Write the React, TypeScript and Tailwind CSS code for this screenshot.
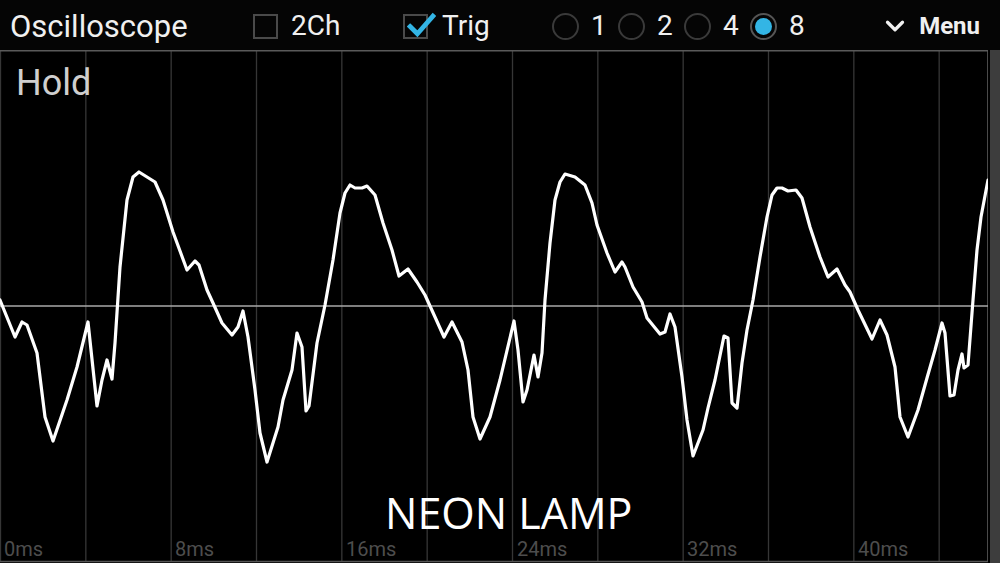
import { ChevronDown } from "lucide-react";

// traced from the capture, screen coords (y is shifted by the toolbar height below)
const trace: [number, number][] = [
  [0, 300], [15, 337], [22, 322], [27, 325], [37, 353], [45, 417], [53, 441], [67, 400],
  [77, 367], [88, 322], [97, 406], [102, 380], [107, 360], [112, 379], [115, 343], [120, 267],
  [127, 200], [133, 177], [139, 172], [147, 177], [155, 182], [163, 200], [173, 232], [187, 270],
  [195, 261], [199, 265], [207, 290], [213, 303], [222, 323], [232, 335], [238, 327], [243, 311],
  [248, 337], [255, 390], [260, 433], [267, 462], [278, 427], [283, 400], [292, 370], [297, 333],
  [302, 347], [306, 411], [309, 406], [317, 343], [325, 305], [333, 260], [340, 213], [345, 193],
  [350, 185], [355, 188], [362, 188], [367, 186], [375, 195], [383, 223], [392, 250], [399, 276],
  [408, 269], [417, 282], [425, 295], [435, 317], [444, 337], [452, 322], [462, 342], [468, 370],
  [473, 417], [480, 439], [490, 417], [500, 380], [514, 321], [518, 350], [523, 402], [527, 390],
  [534, 355], [538, 377], [542, 353], [545, 300], [550, 243], [555, 200], [560, 182], [565, 174],
  [575, 177], [585, 185], [592, 203], [597, 225], [607, 253], [615, 272], [622, 262], [625, 267],
  [633, 287], [642, 302], [647, 318], [660, 334], [665, 332], [670, 314], [675, 327], [682, 377],
  [687, 420], [693, 456], [703, 430], [708, 408], [715, 380], [724, 336], [728, 338], [732, 403],
  [737, 408], [742, 363], [747, 330], [753, 300], [760, 257], [767, 217], [772, 195], [777, 188],
  [782, 188], [788, 191], [796, 190], [802, 198], [810, 227], [820, 257], [828, 277], [837, 269],
  [845, 285], [850, 292], [858, 310], [872, 339], [880, 320], [887, 335], [895, 367], [900, 417],
  [908, 437], [918, 410], [927, 378], [935, 350], [942, 323], [945, 333], [950, 396], [954, 395],
  [958, 370], [962, 354], [964, 368], [968, 365], [973, 300], [977, 250], [981, 217], [988, 180],
];

const timeLabels = [
  { text: "0ms", left: "left-[4px]" },
  { text: "8ms", left: "left-[175px]" },
  { text: "16ms", left: "left-[346px]" },
  { text: "24ms", left: "left-[517px]" },
  { text: "32ms", left: "left-[687px]" },
  { text: "40ms", left: "left-[858px]" },
];

const zoomSteps = ["1", "2", "4", "8"];

function CheckBox({ checked }: { checked: boolean }) {
  return (
    <div className="relative h-[25px] w-[25px] border-2 border-[#4a4a4a]">
      {checked && (
        <svg
          viewBox="0 0 28 28"
          className="absolute left-[2px] top-[-4px] h-[29px] w-[29px]"
        >
          <path
            d="M3 14 L10 21 L25 4"
            fill="none"
            stroke="#33b5e5"
            strokeWidth="4.5"
            strokeLinecap="square"
          />
        </svg>
      )}
    </div>
  );
}

function Radio({ selected }: { selected: boolean }) {
  return (
    <div
      className={`flex h-[27px] w-[27px] items-center justify-center rounded-full border-2 ${
        selected ? "border-[#555]" : "border-[#3a3a3a]"
      }`}
    >
      {selected && <div className="h-[17px] w-[17px] rounded-full bg-[#33b5e5]" />}
    </div>
  );
}

export default function App() {
  const points = trace.map(([x, y]) => `${x},${y - 50}`).join(" ");
  const gridX = Array.from({ length: 12 }, (_, i) => i * (1024 / 12));

  return (
    <div className="flex h-[563px] w-[1000px] flex-col overflow-hidden bg-black font-['Roboto',sans-serif] text-[#f0f0f0]">
      {/* Toolbar */}
      <div className="flex h-[50px] items-center bg-[#050505] pt-[2px]">
        <div className="w-[253px] pl-[10px] text-[31px] leading-none">Oscilloscope</div>

        <div className="flex w-[150px] items-center gap-[13px]">
          <CheckBox checked={false} />
          <span className="text-[28px] leading-none">2Ch</span>
        </div>

        <div className="flex w-[149px] items-center gap-[14px]">
          <CheckBox checked />
          <span className="text-[28px] leading-none">Trig</span>
        </div>

        <div className="flex items-center">
          {zoomSteps.map((n) => (
            <div key={n} className="flex w-[66px] items-center gap-[12px]">
              <Radio selected={n === "8"} />
              <span className="text-[28px] leading-none">{n}</span>
            </div>
          ))}
        </div>

        <div className="ml-auto flex items-center gap-[9px] pr-[20px]">
          <ChevronDown size={30} strokeWidth={2.6} />
          <span className="text-[24px] font-bold leading-none">Menu</span>
        </div>
      </div>

      {/* Scope area */}
      <div className="flex flex-1 gap-[2px]">
        <div className="relative h-[513px] w-[988px]">
          <svg width="988" height="513" viewBox="0 0 988 513" className="block">
            {gridX.map((x) => (
              <line key={x} x1={x + 0.5} y1={0} x2={x + 0.5} y2={512} stroke="#363636" strokeWidth="1.3" />
            ))}
            <line x1={987.5} y1={0} x2={987.5} y2={512} stroke="#4a4a4a" strokeWidth="1" />
            <line x1={0} y1={0.75} x2={988} y2={0.75} stroke="#5a5a5a" strokeWidth="1.5" />
            <line x1={0} y1={511.5} x2={988} y2={511.5} stroke="#555" strokeWidth="1.5" />
            <line x1={0} y1={256} x2={988} y2={256} stroke="#a8a8a8" strokeWidth="1.5" />
            <polyline
              points={points}
              fill="none"
              stroke="#ffffff"
              strokeWidth="3.2"
              strokeLinejoin="round"
              strokeLinecap="round"
            />
          </svg>

          <div className="absolute left-[16px] top-[15px] text-[36px] leading-none text-[#cfcfcf]">
            Hold
          </div>

          <div className="absolute left-[385px] top-[446px] font-['Open_Sans',sans-serif] text-[43px] leading-[34px] text-white">
            NEON LAMP
          </div>

          {timeLabels.map((l) => (
            <div
              key={l.text}
              className={`absolute top-[490px] text-[20px] leading-[18px] text-[#4d4d4d] ${l.left}`}
            >
              {l.text}
            </div>
          ))}
        </div>
        <div className="flex-1 bg-[#3d3d3d]" />
      </div>
    </div>
  );
}
